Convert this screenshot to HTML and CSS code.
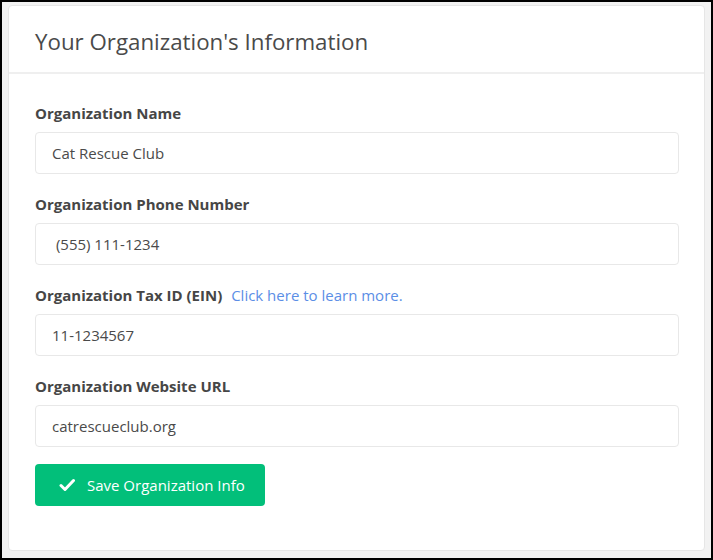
FILE: index.html
```html
<!DOCTYPE html>
<html>
<head>
<meta charset="utf-8">
<link rel="stylesheet" href="styles.css">
</head>
<body>
<div class="frame">
  <div class="card">
    <div class="card-header">
      <h1 class="title">Your Organization's Information</h1>
    </div>
    <div class="card-body">
      <div class="field">
        <label class="label">Organization Name</label>
        <div class="input">Cat Rescue Club</div>
      </div>
      <div class="field">
        <label class="label">Organization Phone Number</label>
        <div class="input">&nbsp;(555) 111-1234</div>
      </div>
      <div class="field">
        <label class="label">Organization Tax ID (EIN) <a class="link">Click here to learn more.</a></label>
        <div class="input">11-1234567</div>
      </div>
      <div class="field last">
        <label class="label">Organization Website URL</label>
        <div class="input">catrescueclub.org</div>
      </div>
      <button class="btn">
        <svg class="check" viewBox="0 0 16 16" width="16" height="16"><path d="M2 8.5 L6 12.5 L14.5 3.5" fill="none" stroke="#fff" stroke-width="3" stroke-linecap="round" stroke-linejoin="round"/></svg>
        <span>Save Organization Info</span>
      </button>
    </div>
  </div>
</div>
</body>
</html>
```
FILE: styles.css
```css
html, body {
  margin: 0;
  padding: 0;
}
body {
  font-family: "Open Sans", "Noto Sans", sans-serif;
  color: #4a4a4a;
}
.frame {
  width: 713px;
  height: 560px;
  box-sizing: border-box;
  border: 2px solid #000;
  background: #f2f2f2;
  padding: 3px 6px 7px 6px;
}
.card {
  height: 100%;
  box-sizing: border-box;
  background: #fff;
  border: 1px solid #e6e6e6;
  border-radius: 4px;
}
.card-header {
  height: 68px;
  box-sizing: border-box;
  border-bottom: 2px solid #efefef;
  display: flex;
  align-items: center;
  padding: 4px 0 0 26px;
}
.title {
  margin: 0;
  font-size: 22.3px;
  font-weight: 400;
  color: #4a4a4a;
}
.card-body {
  padding: 29px 25px 0 26px;
}
.field {
  margin-bottom: 20px;
}
.field.last {
  margin-bottom: 17px;
}
.label {
  display: block;
  font-size: 15px;
  font-weight: 700;
  line-height: 20px;
  margin-bottom: 9px;
  color: #464646;
}
.link {
  font-weight: 400;
  color: #5b8ee6;
  margin-left: 5px;
}
.input {
  height: 42px;
  box-sizing: border-box;
  border: 1px solid #e8e8e8;
  border-radius: 4px;
  padding-left: 16px;
  display: flex;
  align-items: center;
  font-size: 15px;
  color: #4a4a4a;
}
.btn {
  display: flex;
  align-items: center;
  height: 42px;
  width: 230px;
  box-sizing: border-box;
  border: none;
  border-radius: 4px;
  background: #02bf7a;
  color: #fff;
  font-family: "Open Sans", sans-serif;
  font-size: 15px;
  padding: 0 0 0 24px;
}
.check {
  margin-right: 12px;
}
```
